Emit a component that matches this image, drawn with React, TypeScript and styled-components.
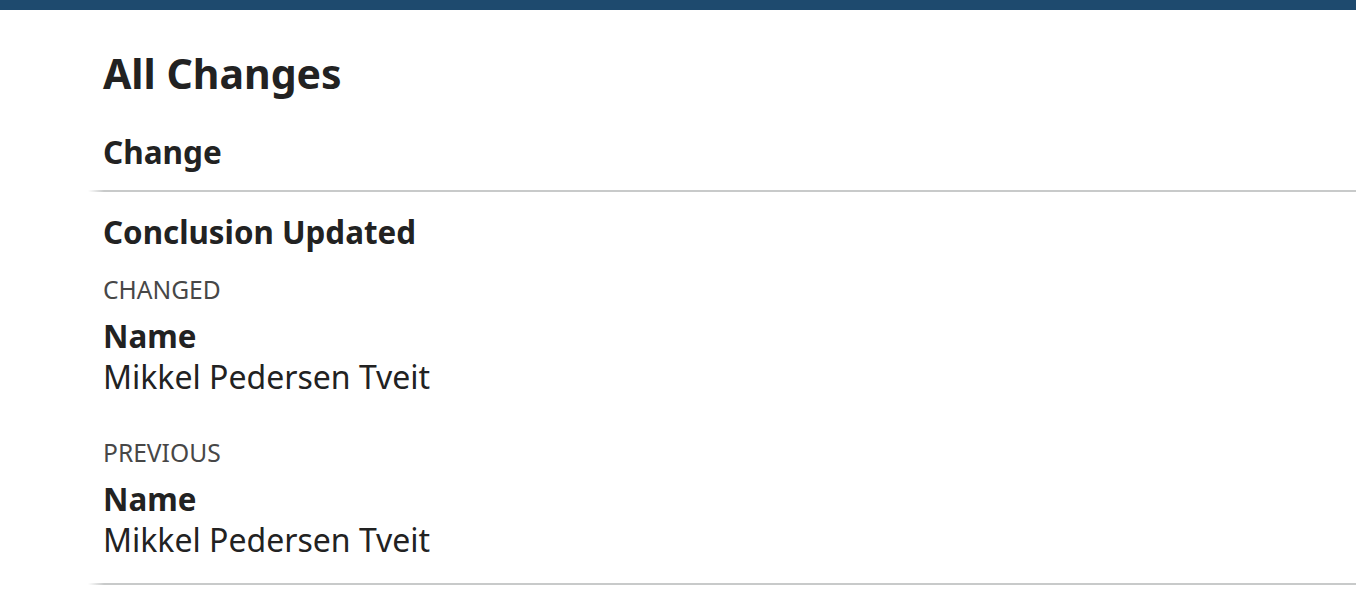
import React from "react";
import styled, { createGlobalStyle } from "styled-components";

const Global = createGlobalStyle`
  html, body { margin: 0; padding: 0; background: #ffffff; }
  body { font-family: "Noto Sans", "Open Sans", sans-serif; color: #222222; }
  * { box-sizing: border-box; }
`;

const TopBar = styled.header`
  height: 10px;
  background: #1e4a6e;
`;

const Main = styled.main`
  padding: 38px 0 0 88px;
`;

const Title = styled.h1`
  margin: 0;
  padding-left: 15px;
  font-size: 41px;
  line-height: 50px;
  font-weight: 700;
  color: #222222;
`;

const Table = styled.table`
  width: 100%;
  border-collapse: collapse;
`;

const HeadCell = styled.th`
  text-align: left;
  padding: 34px 15px 18px;
  font-size: 31.5px;
  line-height: 40px;
  font-weight: 700;
  color: #222222;
`;

const Divider = styled.tr`
  height: 2px;
  background: linear-gradient(to right, rgba(200, 202, 202, 0) 0, #c8caca 16px);
  & td { padding: 0; height: 2px; }
`;

const Cell = styled.td`
  padding: 20px 15px 23px;
  vertical-align: top;
`;

const EntryTitle = styled.div`
  font-size: 31.3px;
  line-height: 40px;
  font-weight: 700;
  color: #222222;
`;

const Label = styled.div<{ $gap: number }>`
  margin-top: ${(p) => p.$gap}px;
  font-size: 24.6px;
  line-height: 32px;
  font-weight: 400;
  color: #474747;
  text-transform: uppercase;
`;

const FieldName = styled.div`
  margin-top: 11px;
  font-size: 31.3px;
  line-height: 39px;
  font-weight: 700;
  color: #222222;
`;

const FieldValue = styled.div`
  font-size: 32px;
  line-height: 41px;
  font-weight: 400;
  color: #222222;
`;

export default function App() {
  return (
    <>
      <Global />
      <TopBar />
      <Main>
        <Title>All Changes</Title>
        <Table>
          <thead>
            <tr>
              <HeadCell>Change</HeadCell>
            </tr>
          </thead>
          <tbody>
            <Divider>
              <td />
            </Divider>
            <tr>
              <Cell>
                <EntryTitle>Conclusion Updated</EntryTitle>
                <Label $gap={22}>Changed</Label>
                <FieldName>Name</FieldName>
                <FieldValue>Mikkel Pedersen Tveit</FieldValue>
                <Label $gap={40}>Previous</Label>
                <FieldName>Name</FieldName>
                <FieldValue>Mikkel Pedersen Tveit</FieldValue>
              </Cell>
            </tr>
            <Divider>
              <td />
            </Divider>
          </tbody>
        </Table>
      </Main>
    </>
  );
}
